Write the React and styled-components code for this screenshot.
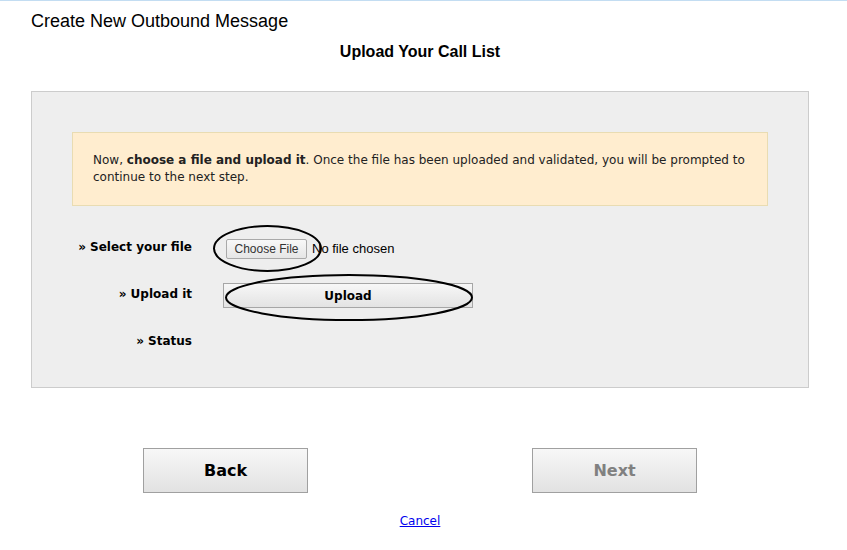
import React from "react";
import styled, { createGlobalStyle } from "styled-components";

const Global = createGlobalStyle`
  html, body { margin: 0; padding: 0; background: #fff; }
  body { border-top: 1px solid #c3ddf2; font-family: "DejaVu Sans", Verdana, sans-serif; }
`;

const Page = styled.div`
  width: 778px;
  margin-left: 31px;
`;

const Title = styled.h1`
  margin: 10px 0 0;
  font: 400 18px/21px "Liberation Sans", Arial, sans-serif;
  color: #000;
`;

const SubTitle = styled.h2`
  margin: 10px 0 0;
  text-align: center;
  font: 700 16px/19px "Liberation Sans", Arial, sans-serif;
  color: #000;
`;

const Panel = styled.section`
  margin-top: 30px;
  border: 1px solid #cccccc;
  background: #eeeeee;
  padding: 40px 40px 21px;
`;

const Notice = styled.div`
  background: #ffedcf;
  border: 1px solid #e9dcb2;
  padding: 19px 20px;
  font-size: 12px;
  line-height: 17px;
  color: #222;
`;

const Form = styled.div`
  margin-top: 19px;
  display: grid;
  grid-template-columns: 120px 1fr;
  grid-auto-rows: 47px;
  column-gap: 31px;
`;

const Label = styled.div`
  align-self: center;
  text-align: right;
  font-size: 12px;
  font-weight: 700;
  color: #000;
  margin-top: ${(p) => p.$up || 0}px;
`;

const Control = styled.div`
  display: flex;
  align-items: center;
`;

const Anchor = styled.div`
  position: relative;
  display: inline-flex;
`;

const Ring = styled.svg`
  position: absolute;
  pointer-events: none;
  overflow: visible;
`;

const ChooseButton = styled.button`
  margin-left: 3px;
  height: 20px;
  width: 81px;
  padding: 0;
  border: 1px solid #a9a9a9;
  border-radius: 2px;
  background: linear-gradient(#f8f8f8, #e6e6e6);
  font: 400 12px "Liberation Sans", Arial, sans-serif;
  color: #333;
`;

const FileText = styled.span`
  margin-left: 5px;
  font: 400 13px "Liberation Sans", Arial, sans-serif;
  color: #000;
`;

const UploadButton = styled.button`
  width: 250px;
  height: 25px;
  padding: 0;
  border: 1px solid #a6a6a6;
  background: linear-gradient(#f7f7f7, #e3e3e3);
  font: 700 12px "DejaVu Sans", Verdana, sans-serif;
  color: #000;
`;

const Actions = styled.div`
  margin-top: 60px;
  display: grid;
  grid-template-columns: 1fr 1fr;
  justify-items: center;
`;

const BigButton = styled.button`
  width: 165px;
  height: 45px;
  padding: 0;
  border: 1px solid #a0a0a0;
  background: linear-gradient(#f7f7f7, #e2e2e2);
  font: 700 16px "DejaVu Sans", Verdana, sans-serif;
  color: ${(p) => (p.disabled ? "#808080" : "#000")};
`;

const CancelRow = styled.div`
  margin-top: 21px;
  text-align: center;
  font-size: 12px;
  line-height: 15px;
`;

const CancelLink = styled.a`
  color: #0000ee;
  text-decoration: underline;
`;

const Ellipse = ({ left, top, w, h }) => (
  <Ring style={{ left, top, width: w, height: h }} viewBox={`0 0 ${w} ${h}`}>
    <ellipse cx={w / 2} cy={h / 2} rx={w / 2 - 1} ry={h / 2 - 1} fill="none" stroke="#000" strokeWidth="2" />
  </Ring>
);

export default function App() {
  return (
    <>
      <Global />
      <Page>
        <Title>Create New Outbound Message</Title>
        <SubTitle>Upload Your Call List</SubTitle>
        <Panel>
          <Notice>
            Now, <b>choose a file and upload it</b>. Once the file has been uploaded and validated, you will be prompted to continue to the next step.
          </Notice>
          <Form>
            <Label $up={-4}>» Select your file</Label>
            <Control>
              <Anchor>
                <ChooseButton type="button">Choose File</ChooseButton>
                <Ellipse left={-10} top={-14} w={109} h={47} />
              </Anchor>
              <FileText>No file chosen</FileText>
            </Control>
            <Label $up={-4}>» Upload it</Label>
            <Control>
              <Anchor>
                <UploadButton type="button">Upload</UploadButton>
                <Ellipse left={2} top={-9} w={248} h={47} />
              </Anchor>
            </Control>
            <Label $up={-4}>» Status</Label>
            <Control />
          </Form>
        </Panel>
        <Actions>
          <BigButton type="button">Back</BigButton>
          <BigButton type="button" disabled>Next</BigButton>
        </Actions>
        <CancelRow>
          <CancelLink href="#">Cancel</CancelLink>
        </CancelRow>
      </Page>
    </>
  );
}
